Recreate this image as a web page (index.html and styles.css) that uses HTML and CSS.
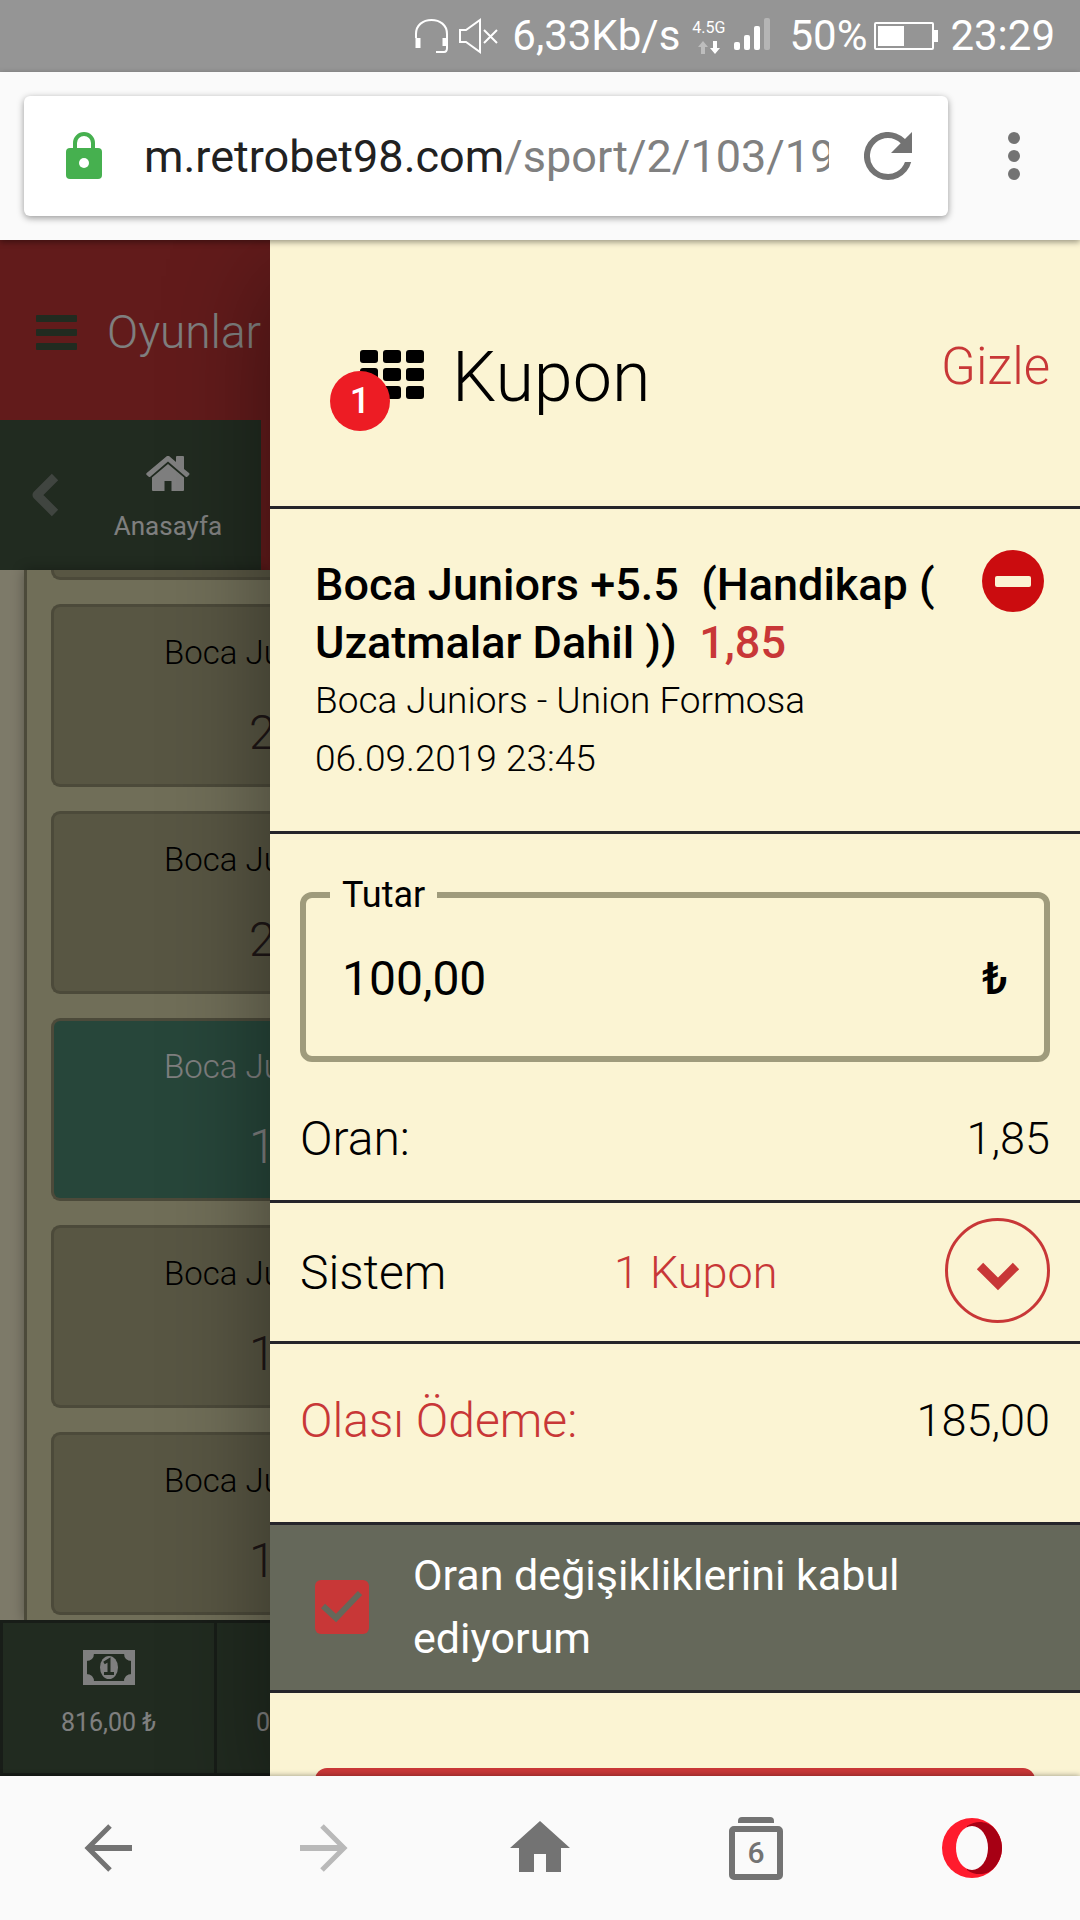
FILE: index.html
```html
<!DOCTYPE html>
<html lang="tr">

<head>
    <meta charset="UTF-8">
    <meta name="viewport" content="width=device-width, initial-scale=1.0">
    <title>Kupon</title>
    <link rel="stylesheet" href="styles.css">
</head>

<body>
    <!-- status bar -->
    <div class="status">
        <svg width="36" height="36" viewBox="0 0 36 36" fill="none" stroke="#fff" stroke-width="2">
            <path d="M2 20v-4C2 7 9 2 17.500 2S33 7 33 16v14q0 4-3 4h-8" />
            <path d="M4 20v10M31 20v8" stroke-width="5" />
        </svg>
        <svg class="status-mute" width="40" height="36" viewBox="0 0 40 36" fill="none" stroke="#fff" stroke-width="2">
            <path d="M2 12h6L22 2v32L8 24H2zM26 12l13 13M39 12L26 25" />
        </svg>
        <span>6,33Kb/s</span>
        <span class="network">
            <span>4.5G</span>
            <svg width="24" height="13" viewBox="0 0 24 13">
                <path d="M6 0l5 6H8v7H4V6H1z" fill="#bdbdbd" />
                <path d="M18 13l5-6h-3V0h-4v7h-3z" fill="#fff" />
            </svg>
        </span>
        <svg class="status-signal" width="37" height="34" viewBox="0 0 37 34" fill="#fff">
            <rect y="25" width="6" height="8" rx="2" />
            <rect x="10" y="18" width="6" height="15" rx="2" />
            <rect x="20" y="9" width="6" height="24" rx="2" />
            <rect x="30" y="1" width="6" height="32" rx="2" fill="#b5b5b5" />
        </svg>
        <span class="status-percent">50%</span>
        <svg class="status-battery" width="64" height="28" viewBox="0 0 64 28">
            <rect x="1" y="1" width="58" height="26" rx="1" fill="none" stroke="#fff" stroke-width="2" />
            <path d="M4 4h26v20H4zM60 8h4v12h-4z" fill="#fff" />
        </svg>
        <span>23:29</span>
    </div>

    <!-- address bar -->
    <div class="browser">
        <div class="omnibox">
            <svg width="36" height="48" viewBox="0 0 36 48">
                <path d="M9 18v-7a9 9 0 0 1 18 0v7" fill="none" stroke="#46b04f" stroke-width="4" />
                <rect y="16" width="36" height="31" rx="4" fill="#46b04f" />
                <circle cx="18" cy="31" r="5" fill="#fff" />
            </svg>
            <a class="url" href="#">m.retrobet98.com<span>/sport/2/103/19</span></a>
            <button class="icon-btn" aria-label="Yenile">
                <svg width="48" height="48" viewBox="0 0 16 16" fill="#737373">
                    <path d="M13.650 2.350A8 8 0 1 0 15.730 10h-2.080A6 6 0 1 1 8 2c1.660 0 3.140.690 4.220 1.780L9 7h7V0z" />
                </svg>
            </button>
        </div>
        <button class="icon-btn more" aria-label="Menü">
            <svg width="12" height="48" viewBox="0 0 12 48" fill="#737373">
                <circle cx="6" cy="6" r="6" />
                <circle cx="6" cy="24" r="6" />
                <circle cx="6" cy="42" r="6" />
            </svg>
        </button>
    </div>

    <div class="page">
        <!-- strip of the page left of the drawer -->
        <div class="app">
            <header class="app-header">
                <svg width="41" height="35" viewBox="0 0 41 35" fill="#425640">
                    <rect width="41" height="7" rx="1" />
                    <rect y="14" width="41" height="7" rx="1" />
                    <rect y="28" width="41" height="7" rx="1" />
                </svg>
                <span>Oyunlar</span>
            </header>
            <nav class="tabs">
                <button class="tabs-prev" aria-label="Geri">
                    <svg width="28" height="44" viewBox="0 0 28 44" fill="none" stroke="#808a80" stroke-width="9" stroke-linejoin="round">
                        <path d="M24 4L6 22l18 18" />
                    </svg>
                </button>
                <a class="tabs-item" href="#">
                    <svg width="44" height="36" viewBox="0 0 44 36" fill="#fff">
                        <path d="M21 0q1-.600 2 0l7 6V1q0-1 1-1h6q1 0 1 1v12l5 4q1 1 0 2l-1.500 1.500q-1 1-2 0L22 5.500 4.500 20.500q-1 1-2 0L.700 19q-1-1 0-2z" />
                        <path d="M22 8l16 13.500V34q0 1-1 1H25.500V25h-7v10H7q-1 0-1-1V21.500z" />
                    </svg>
                    <span>Anasayfa</span>
                </a>
            </nav>
            <main class="odds">
                <button class="odd odd-short" aria-label="Boca Juniors"></button>
                <button class="odd">
                    <span class="odd-name">Boca Ju</span>
                    <span class="odd-value">2</span>
                </button>
                <button class="odd">
                    <span class="odd-name">Boca Ju</span>
                    <span class="odd-value">2</span>
                </button>
                <button class="odd selected">
                    <span class="odd-name">Boca Ju</span>
                    <span class="odd-value">1</span>
                </button>
                <button class="odd">
                    <span class="odd-name">Boca Ju</span>
                    <span class="odd-value">1,</span>
                </button>
                <button class="odd">
                    <span class="odd-name">Boca Ju</span>
                    <span class="odd-value">1,</span>
                </button>
            </main>
            <footer class="account">
                <div class="account-cell">
                    <svg width="52" height="35" viewBox="0 0 52 35">
                        <rect x="2" y="2" width="48" height="31" fill="none" stroke="#fff" stroke-width="4" />
                        <path d="M3 3h8q0 8-8 8zM49 3h-8q0 8 8 8zM3 32h8q0-8-8-8zM49 32h-8q0-8 8-8z" fill="#fff" />
                        <ellipse cx="26" cy="17.500" rx="9" ry="11.500" fill="#fff" />
                        <path d="M21 13l5-3v13M21 23.500h10" fill="none" stroke="#425640" stroke-width="3" />
                    </svg>
                    <span>816,00 ₺</span>
                </div>
                <div class="account-cell account-next">
                    <span>0</span>
                </div>
            </footer>
        </div>
        <div class="overlay"></div>

        <!-- coupon drawer -->
        <aside class="drawer">
            <header class="coupon-header">
                <span class="coupon-icon">
                    <svg width="64" height="50" viewBox="0 0 64 50">
                        <rect width="18" height="13" rx="3" />
                        <rect x="23" width="18" height="13" rx="3" />
                        <rect x="46" width="18" height="13" rx="3" />
                        <rect y="18" width="18" height="13" rx="3" />
                        <rect x="23" y="18" width="18" height="13" rx="3" />
                        <rect x="46" y="18" width="18" height="13" rx="3" />
                        <rect y="36" width="18" height="13" rx="3" />
                        <rect x="23" y="36" width="18" height="13" rx="3" />
                        <rect x="46" y="36" width="18" height="13" rx="3" />
                    </svg>
                    <span class="badge">1</span>
                </span>
                <h1>Kupon</h1>
                <button class="hide-btn">Gizle</button>
            </header>

            <section class="bet">
                <div class="bet-info">
                    <h2>Boca Juniors +5.5 &nbsp;(Handikap (<br>Uzatmalar Dahil )) &nbsp;<span class="red">1,85</span></h2>
                    <p>Boca Juniors - Union Formosa</p>
                    <p>06.09.2019 23:45</p>
                </div>
                <button class="remove-btn" aria-label="Sil">
                    <svg width="62" height="62" viewBox="0 0 62 62">
                        <circle cx="31" cy="31" r="31" fill="#cb0c0f" />
                        <rect x="13" y="26" width="36" height="11" rx="2" fill="#fbf4d3" />
                    </svg>
                </button>
            </section>

            <section class="stake">
                <fieldset>
                    <legend><label for="stake">Tutar</label></legend>
                    <input id="stake" type="text" value="100,00">
                    <span class="currency">₺</span>
                </fieldset>
                <div class="row">
                    <span>Oran:</span>
                    <span class="value">1,85</span>
                </div>
            </section>

            <section class="row system">
                <span>Sistem</span>
                <span class="value red">1 Kupon</span>
                <button class="round-btn" aria-label="Aç">
                    <svg width="44" height="30" viewBox="0 0 44 30" fill="none" stroke="#c83737" stroke-width="9">
                        <path d="M4 5l18 18L40 5" />
                    </svg>
                </button>
            </section>

            <section class="row payout">
                <span class="red">Olası Ödeme:</span>
                <span class="value">185,00</span>
            </section>

            <label class="accept">
                <input type="checkbox" checked>
                <svg width="54" height="54" viewBox="0 0 54 54">
                    <rect width="54" height="54" rx="6" fill="#c83737" />
                    <path d="M8 26l13 12L45 13" fill="none" stroke="#65685a" stroke-width="6" />
                </svg>
                <span>Oran değişikliklerini kabul ediyorum</span>
            </label>

            <div class="submit">
                <button class="submit-btn" aria-label="Kuponu oyna"></button>
            </div>
        </aside>
    </div>

    <!-- browser bottom bar -->
    <nav class="bottom">
        <button class="icon-btn" aria-label="Geri">
            <svg width="48" height="54" viewBox="0 0 48 54" fill="none" stroke="#737373" stroke-width="6">
                <path d="M26 5L4 27l22 22" stroke-width="5" />
                <path d="M48 27H7" />
            </svg>
        </button>
        <button class="icon-btn" aria-label="İleri">
            <svg width="48" height="54" viewBox="0 0 48 54" fill="none" stroke="#b9b9b9" stroke-width="6">
                <path d="M22 5l22 22-22 22" stroke-width="5" />
                <path d="M0 27h41" />
            </svg>
        </button>
        <button class="icon-btn" aria-label="Ana sayfa">
            <svg width="60" height="54" viewBox="0 0 60 54" fill="#737373">
                <path d="M30 0l30 27h-9v24H36V33H24v18H9V27H0z" />
            </svg>
        </button>
        <button class="icon-btn tab-count" aria-label="Sekmeler"><span>6</span></button>
        <button class="icon-btn" aria-label="Opera">
            <svg width="60" height="60" viewBox="0 0 60 60">
                <circle cx="30" cy="30" r="30" fill="#ff1b2d" />
                <path d="M25 8C35 1 46 4 51 9c12 12 12 30 0 42-5 5-16 8-26 1z" fill="#a70014" />
                <ellipse cx="30" cy="30" rx="16" ry="22" fill="#fafafa" />
            </svg>
        </button>
    </nav>
</body>

</html>
```

FILE: styles.css
```css
* {
    box-sizing: border-box;
}

body {
    margin: 0;
    height: 100vh;
    display: flex;
    flex-direction: column;
    overflow: hidden;
    font-family: Roboto, "Liberation Sans", sans-serif;
    color: #000;
}

h1,
h2,
p {
    margin: 0;
}

button,
input {
    margin: 0;
    padding: 0;
    border: none;
    background: none;
    font: inherit;
    color: inherit;
}

svg {
    display: block;
    flex: none;
}

a {
    color: inherit;
    text-decoration: none;
}

.red {
    color: #c83737;
}

/* status bar */
.status {
    flex: none;
    height: 72px;
    padding-right: 25px;
    display: flex;
    align-items: center;
    justify-content: flex-end;
    background: #959595;
    color: #fff;
    font-size: 42px;
    line-height: 72px;
}

.status-mute {
    margin: 0 14px 0 8px;
}

.network {
    display: flex;
    flex-direction: column;
    align-items: center;
    gap: 4px;
    margin: 0 9px 0 12px;
    font-size: 16px;
    line-height: 18px;
}

.status-signal {
    margin-bottom: 4px;
}

.status-percent {
    margin: 0 7px 0 18px;
}

.status-battery {
    margin-right: 12px;
}

/* address bar */
.browser {
    flex: none;
    height: 168px;
    padding: 0 24px;
    display: flex;
    align-items: center;
    background: #fafafa;
    box-shadow: 0 2px 6px rgba(0, 0, 0, .4);
    z-index: 2;
}

.omnibox {
    flex: 1;
    min-width: 0;
    height: 120px;
    padding: 0 36px 0 42px;
    display: flex;
    align-items: center;
    background: #fff;
    border-radius: 6px;
    box-shadow: 0 2px 7px rgba(0, 0, 0, .4);
}

.url {
    flex: 1;
    min-width: 0;
    margin: 0 35px 0 42px;
    padding-top: 2px;
    overflow: hidden;
    white-space: nowrap;
    font-size: 45px;
    line-height: 60px;
    color: #212121;
}

.url span {
    color: #808080;
}

.icon-btn {
    display: flex;
    align-items: center;
    justify-content: center;
}

.more {
    margin: 0 36px 0 60px;
}

.page {
    flex: 1;
    min-height: 0;
    position: relative;
    overflow: hidden;
}

/* strip of the page left of the drawer */
.app {
    width: 25%;
    height: 100%;
    display: flex;
    flex-direction: column;
    overflow: hidden;
    background: #fbf4d3;
    font-weight: 300;
}

.app-header {
    flex: none;
    height: 180px;
    padding: 4px 0 0 36px;
    display: flex;
    align-items: center;
    gap: 30px;
    background: #c53636;
    color: #fff;
    font-size: 46px;
}

.tabs {
    flex: none;
    height: 150px;
    padding-right: 9px;
    display: flex;
    background: #c53636;
    color: #fff;
}

.tabs-prev {
    width: 75px;
    padding-left: 31px;
    background: #425640;
}

.tabs-item {
    flex: 1;
    display: flex;
    flex-direction: column;
    align-items: center;
    gap: 16px;
    padding-top: 36px;
    background: #425640;
    font-size: 26px;
    line-height: 36px;
    font-weight: 400;
}

.odds {
    flex: 1;
    min-height: 0;
    margin-left: 24px;
    padding-left: 24px;
    overflow: hidden;
    border-left: 3px solid #989474;
    background: #e0dcb0;
    box-shadow: 0 0 12px rgba(0, 0, 0, .3);
}

.odd {
    width: 100%;
    height: 183px;
    margin-bottom: 24px;
    padding: 16px 0 0 110px;
    display: flex;
    flex-direction: column;
    align-items: flex-start;
    gap: 20px;
    overflow: hidden;
    border: 3px solid #989474;
    border-right: none;
    border-radius: 9px 0 0 9px;
    background: #b0ac86;
    white-space: nowrap;
}

.odd-short {
    height: 10px;
    padding: 0;
    border-top: none;
    border-radius: 0 0 0 9px;
}

.odd-name {
    font-size: 33px;
    line-height: 60px;
}

.odd-value {
    padding-left: 85px;
    font-size: 48px;
    line-height: 60px;
    color: #3c2c2c;
}

.selected,
.selected .odd-value {
    color: #fff;
}

.selected {
    background: #4e8c74;
}

.account {
    flex: none;
    height: 156px;
    padding: 3px 0 3px 3px;
    display: flex;
    gap: 3px;
    background: #303a30;
    color: #fff;
    font-size: 25px;
    line-height: 36px;
    font-weight: 400;
}

.account-cell {
    flex: 4;
    padding-top: 27px;
    display: flex;
    flex-direction: column;
    align-items: center;
    gap: 20px;
    background: #425640;
}

.account-next {
    flex: 1;
    padding-top: 82px;
    align-items: flex-end;
}

.overlay {
    position: absolute;
    inset: 0;
    background: rgba(0, 0, 0, .5);
}

/* coupon drawer */
.drawer {
    position: absolute;
    top: 0;
    right: 0;
    bottom: 0;
    width: 75%;
    background: #fbf4d3;
    box-shadow: 0 36px 96px rgba(0, 0, 0, .4);
    font-size: 48px;
    font-weight: 300;
}

.coupon-header {
    height: 269px;
    padding: 4px 30px 0 90px;
    display: flex;
    align-items: center;
    border-bottom: 3px solid #25252a;
}

.coupon-icon {
    position: relative;
}

.badge {
    position: absolute;
    left: -30px;
    top: 21px;
    width: 60px;
    border-radius: 50%;
    background: #ed1c24;
    color: #fff;
    font-size: 36px;
    line-height: 60px;
    font-weight: 500;
    text-align: center;
}

.coupon-header h1 {
    flex: 1;
    padding: 4px 0 0 28px;
    font-size: 70px;
    font-weight: 300;
}

.hide-btn {
    padding-bottom: 18px;
    color: #c83737;
    font-size: 51px;
}

.bet {
    padding: 47px 36px 43px 45px;
    display: flex;
    align-items: flex-start;
    justify-content: space-between;
    border-bottom: 3px solid #25252a;
    line-height: 58px;
}

.bet-info {
    white-space: nowrap;
    font-size: 37px;
}

.bet h2 {
    font-size: 45px;
    font-weight: 500;
}

.remove-btn {
    margin-top: -6px;
}

.stake {
    padding: 40px 30px 0;
    border-bottom: 3px solid #25252a;
}

.stake fieldset {
    min-width: 0;
    margin: 0;
    padding: 0 24px 16px;
    display: flex;
    align-items: center;
    border: 6px solid #9f9b7c;
    border-radius: 12px;
    font-weight: 400;
}

.stake legend {
    padding: 0 12px;
    font-size: 36px;
    line-height: 42px;
}

.stake input {
    flex: 1;
    min-width: 0;
    height: 124px;
    padding-left: 12px;
    outline: none;
}

.currency {
    padding-right: 12px;
    font-size: 45px;
    font-weight: 500;
}

.row {
    height: 138px;
    display: flex;
    align-items: center;
    justify-content: space-between;
}

.value {
    font-size: 45px;
}

.stake .row {
    padding-top: 14px;
}

.system,
.payout {
    padding: 0 30px;
    border-bottom: 3px solid #25252a;
}

.system {
    height: 141px;
}

.round-btn {
    width: 105px;
    height: 105px;
    margin-bottom: 3px;
    padding-top: 10px;
    display: flex;
    align-items: center;
    justify-content: center;
    border: 3px solid #c83737;
    border-radius: 50%;
}

.payout {
    height: 181px;
    padding-bottom: 26px;
}

.accept {
    padding: 19px 45px 20px;
    display: flex;
    align-items: center;
    gap: 44px;
    border-bottom: 3px solid #25252a;
    background: #65685a;
    color: #fff;
    font-size: 43px;
    line-height: 63px;
    font-weight: 400;
}

.accept input {
    position: absolute;
    opacity: 0;
}

.submit {
    padding: 75px 45px;
}

.submit-btn {
    width: 100%;
    height: 120px;
    border-radius: 12px;
    background: #c83737;
}

/* browser bottom bar */
.bottom {
    flex: none;
    height: 144px;
    display: grid;
    grid-template-columns: repeat(5, 1fr);
    background: #fafafa;
    box-shadow: 0 0 6px rgba(0, 0, 0, .4);
    z-index: 2;
}

.tab-count {
    flex-direction: column;
    gap: 3px;
    color: #737373;
    font-size: 30px;
    font-weight: 500;
}

.tab-count::before {
    content: "";
    width: 36px;
    height: 6px;
    border-radius: 4px 4px 0 0;
    background: #737373;
}

.tab-count span {
    width: 54px;
    line-height: 42px;
    border: 6px solid #737373;
    border-radius: 5px;
}
```
